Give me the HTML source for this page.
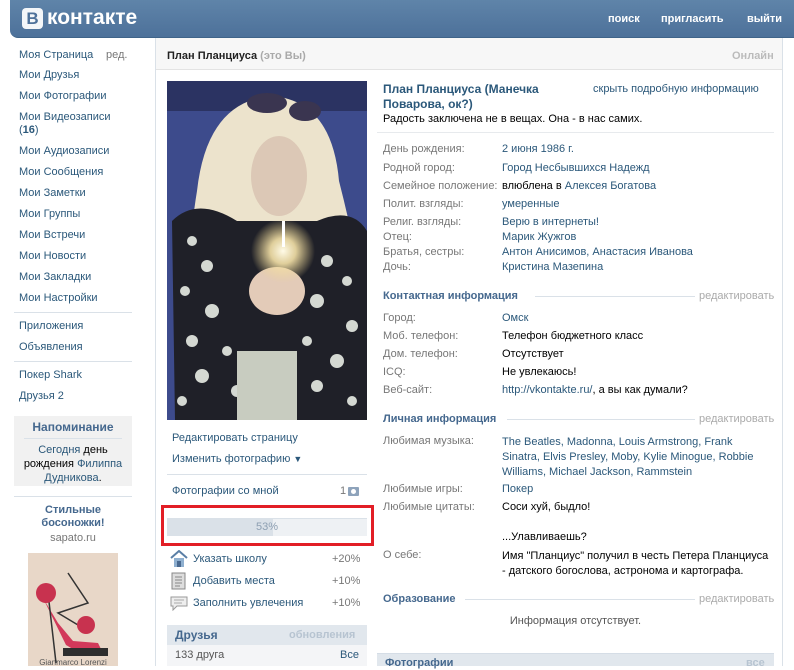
<!DOCTYPE html>
<html><head><meta charset="utf-8">
<style>
*{margin:0;padding:0;box-sizing:border-box}
body{width:794px;height:666px;overflow:hidden;background:#fff;font-family:"Liberation Sans",Tahoma,sans-serif;font-size:11px;color:#000;position:relative}
.a{position:absolute;white-space:nowrap;line-height:13px}
.l{color:#2b587a}
.g{color:#777}
.b{font-weight:bold}
.sec{color:#45688e;font-weight:bold}
.hr{position:absolute;height:1px;background:#dae1e8}
</style></head><body>
<!-- header -->
<div style="position:absolute;left:10px;top:0;width:784px;height:38px;background:linear-gradient(#5f84a9,#4d719a);border-bottom-left-radius:8px;border-bottom:1px solid #3f6489"></div>
<div style="position:absolute;left:22px;top:8px;width:21px;height:21px;background:#f3f6f9;border-radius:4px;color:#4d719a;font:bold 17px 'Liberation Sans',sans-serif;text-align:center;line-height:21px">В</div>
<div class="a" style="left:47px;top:6px;color:#fff;font-weight:bold;font-size:21px;line-height:24px">контакте</div>
<div class="a" style="left:608px;top:13px;color:#fff;font-weight:bold">поиск</div>
<div class="a" style="left:661px;top:13px;color:#fff;font-weight:bold">пригласить</div>
<div class="a" style="left:747px;top:13px;color:#fff;font-weight:bold">выйти</div>

<!-- left menu -->
<div class="a l" style="left:19px;top:49px">Моя Страница</div>
<div class="a g" style="left:106px;top:49px">ред.</div>
<div class="a l" style="left:19px;top:69px">Мои Друзья</div>
<div class="a l" style="left:19px;top:90px">Мои Фотографии</div>
<div class="a l" style="left:19px;top:111px">Мои Видеозаписи</div>
<div class="a l" style="left:19px;top:124px">(<b>16</b>)</div>
<div class="a l" style="left:19px;top:145px">Мои Аудиозаписи</div>
<div class="a l" style="left:19px;top:166px">Мои Сообщения</div>
<div class="a l" style="left:19px;top:187px">Мои Заметки</div>
<div class="a l" style="left:19px;top:208px">Мои Группы</div>
<div class="a l" style="left:19px;top:229px">Мои Встречи</div>
<div class="a l" style="left:19px;top:250px">Мои Новости</div>
<div class="a l" style="left:19px;top:271px">Мои Закладки</div>
<div class="a l" style="left:19px;top:292px">Мои Настройки</div>
<div class="hr" style="left:14px;top:312px;width:118px"></div>
<div class="a l" style="left:19px;top:320px">Приложения</div>
<div class="a l" style="left:19px;top:341px">Объявления</div>
<div class="hr" style="left:14px;top:361px;width:118px"></div>
<div class="a l" style="left:19px;top:369px">Покер Shark</div>
<div class="a l" style="left:19px;top:390px">Друзья 2</div>

<div style="position:absolute;left:14px;top:416px;width:118px;height:70px;background:#f1f1f1"></div>
<div class="a b" style="left:14px;top:421px;width:118px;text-align:center;color:#45688e;font-size:12px">Напоминание</div>
<div class="hr" style="left:24px;top:438px;width:98px"></div>
<div class="a" style="left:14px;top:443px;width:118px;text-align:center;line-height:14px;white-space:normal"><span class="l">Сегодня</span> день<br>рождения <span class="l">Филиппа</span><br><span class="l">Дудникова</span>.</div>
<div class="hr" style="left:14px;top:496px;width:118px"></div>
<div class="a b" style="left:14px;top:504px;width:118px;text-align:center;color:#45688e;line-height:13px;white-space:normal">Стильные<br>босоножки!</div>
<div class="a g" style="left:14px;top:532px;width:118px;text-align:center">sapato.ru</div>
<svg style="position:absolute;left:28px;top:553px" width="90" height="113">
<rect width="90" height="113" fill="#e8d7c8"/>
<path d="M15 45 L30 70 L45 88 L70 90 L75 100 L55 102 L38 92 Z" fill="#d2395a"/>
<path d="M20 40 L28 110 M40 20 L60 50 L30 60 L55 75" stroke="#333" stroke-width="1.5" fill="none"/>
<circle cx="18" cy="40" r="10" fill="#c8324f"/><circle cx="58" cy="72" r="9" fill="#c8324f"/>
<rect x="35" y="95" width="45" height="8" fill="#2e2e2e"/>
<text x="45" y="112" font-size="8" fill="#555" text-anchor="middle" font-family="Liberation Sans">Gianmarco Lorenzi</text>
</svg>

<!-- main panel -->
<div style="position:absolute;left:155px;top:38px;width:1px;height:628px;background:#dae1e8"></div>
<div style="position:absolute;left:782px;top:38px;width:1px;height:628px;background:#dae1e8"></div>
<div style="position:absolute;left:156px;top:38px;width:626px;height:32px;background:#f7f7f7;border-bottom:1px solid #e3e3e3"></div>
<div class="a b" style="left:167px;top:50px;color:#222">План Планциуса <span style="color:#aaa">(это Вы)</span></div>
<div class="a b" style="left:732px;top:50px;color:#bbb">Онлайн</div>

<!-- photo -->
<svg style="position:absolute;left:167px;top:81px" width="200" height="339">
<defs><radialGradient id="gl" cx="0.5" cy="0.5" r="0.5"><stop offset="0" stop-color="#fffbe8"/><stop offset="0.4" stop-color="#f5e2a8" stop-opacity=".9"/><stop offset="1" stop-color="#f0d890" stop-opacity="0"/></radialGradient></defs>
<rect width="200" height="339" fill="#3d4b8c"/>
<rect width="200" height="30" fill="#2b3362"/>
<path d="M30 110 Q40 20 105 15 Q165 20 172 100 Q190 170 198 230 L170 240 L40 240 Q15 200 30 110Z" fill="#ece3cc"/>
<path d="M5 140 Q30 115 70 140 L150 140 Q185 125 200 150 L200 339 L8 339 Z" fill="#1f2028"/>
<g fill="#d4d8d2">
<circle cx="25" cy="160" r="5"/><circle cx="40" cy="185" r="6"/><circle cx="18" cy="210" r="5"/><circle cx="45" cy="230" r="7"/><circle cx="25" cy="260" r="6"/><circle cx="60" cy="270" r="5"/><circle cx="35" cy="295" r="7"/><circle cx="15" cy="320" r="5"/><circle cx="70" cy="310" r="6"/>
<circle cx="160" cy="180" r="6"/><circle cx="180" cy="200" r="5"/><circle cx="150" cy="220" r="7"/><circle cx="185" cy="245" r="6"/><circle cx="140" cy="260" r="5"/><circle cx="170" cy="280" r="7"/><circle cx="150" cy="305" r="6"/><circle cx="185" cy="320" r="5"/><circle cx="120" cy="290" r="5"/><circle cx="95" cy="300" r="6"/>
</g>
<rect x="70" y="270" width="60" height="69" fill="#c8ccc0"/>
<ellipse cx="112" cy="95" rx="28" ry="40" fill="#dcc8b6"/>
<ellipse cx="110" cy="210" rx="28" ry="24" fill="#e3cbb8"/>
<ellipse cx="116" cy="170" rx="32" ry="32" fill="url(#gl)"/>
<rect x="115" y="140" width="3" height="26" fill="#fff"/>
<ellipse cx="100" cy="22" rx="20" ry="10" fill="#3a3550"/>
<ellipse cx="138" cy="30" rx="16" ry="10" fill="#3a3550"/>
</svg>

<div class="a l" style="left:172px;top:432px">Редактировать страницу</div>
<div class="a l" style="left:172px;top:453px">Изменить фотографию <span style="font-size:9px">▼</span></div>
<div class="hr" style="left:167px;top:474px;width:200px"></div>
<div class="a l" style="left:172px;top:485px">Фотографии со мной</div>
<div class="a g" style="left:340px;top:485px">1</div>
<div style="position:absolute;left:348px;top:487px;width:11px;height:9px;background:#8ea3bb;border-radius:1px"></div>
<div style="position:absolute;left:351px;top:489px;width:5px;height:5px;background:#fff;border-radius:50%"></div>

<div style="position:absolute;left:161px;top:505px;width:213px;height:41px;border:3px solid #e21e26"></div>
<div style="position:absolute;left:167px;top:518px;width:200px;height:18px;background:#eef1f4;border-top:1px solid #dae1e8"></div>
<div style="position:absolute;left:167px;top:518px;width:106px;height:18px;background:#dae1e8"></div>
<div class="a" style="left:167px;top:521px;width:200px;text-align:center;color:#8d9fb2">53%</div>

<svg style="position:absolute;left:170px;top:550px" width="18" height="18"><path d="M1 8 L9 1 L17 8" stroke="#5a7fa6" stroke-width="2" fill="none"/><rect x="4" y="8" width="10" height="9" fill="#8fb0d0"/><rect x="7" y="11" width="4" height="6" fill="#4a6a90"/></svg>
<svg style="position:absolute;left:171px;top:572px" width="15" height="18"><rect x="1" y="1" width="13" height="16" fill="#ddd" stroke="#888"/><path d="M4 5h7M4 8h7M4 11h7M4 14h5" stroke="#888"/></svg>
<svg style="position:absolute;left:170px;top:596px" width="18" height="15"><path d="M1 1h16v9H7l-4 4v-4H1z" fill="#eee" stroke="#999"/><path d="M4 4h10M4 7h8" stroke="#aaa"/></svg>
<div class="a l" style="left:193px;top:553px">Указать школу</div><div class="a g" style="left:332px;top:553px">+20%</div>
<div class="a l" style="left:193px;top:575px">Добавить места</div><div class="a g" style="left:332px;top:575px">+10%</div>
<div class="a l" style="left:193px;top:597px">Заполнить увлечения</div><div class="a g" style="left:332px;top:597px">+10%</div>

<div style="position:absolute;left:167px;top:625px;width:200px;height:20px;background:#e1e7ed"></div>
<div class="a b" style="left:175px;top:629px;color:#45688e;font-size:12px">Друзья</div>
<div class="a b" style="left:289px;top:629px;color:#b7c4d1">обновления</div>
<div style="position:absolute;left:167px;top:645px;width:200px;height:21px;background:#f4f5f7"></div>
<div class="a g" style="left:175px;top:649px;color:#555">133 друга</div>
<div class="a l" style="left:340px;top:649px">Все</div>

<!-- right column -->
<div class="a b l" style="left:383px;top:82px;font-size:12px;line-height:15px">План Планциуса (Манечка<br>Поварова, ок?)</div>
<div class="a l" style="left:593px;top:83px">скрыть подробную информацию</div>
<div class="a" style="left:383px;top:113px">Радость заключена не в вещах. Она - в нас самих.</div>
<div class="hr" style="left:377px;top:132px;width:397px;background:#e7eaed"></div>

<div class="a g" style="left:383px;top:143px">День рождения:</div><div class="a l" style="left:502px;top:143px">2 июня 1986 г.</div>
<div class="a g" style="left:383px;top:162px">Родной город:</div><div class="a l" style="left:502px;top:162px">Город Несбывшихся Надежд</div>
<div class="a g" style="left:383px;top:180px">Семейное положение:</div><div class="a" style="left:502px;top:180px">влюблена в <span class="l">Алексея Богатова</span></div>
<div class="a g" style="left:383px;top:198px">Полит. взгляды:</div><div class="a l" style="left:502px;top:198px">умеренные</div>
<div class="a g" style="left:383px;top:216px">Религ. взгляды:</div><div class="a l" style="left:502px;top:216px">Верю в интернеты!</div>
<div class="a g" style="left:383px;top:231px">Отец:</div><div class="a l" style="left:502px;top:231px">Марик Жужгов</div>
<div class="a g" style="left:383px;top:246px">Братья, сестры:</div><div class="a l" style="left:502px;top:246px">Антон Анисимов, Анастасия Иванова</div>
<div class="a g" style="left:383px;top:261px">Дочь:</div><div class="a l" style="left:502px;top:261px">Кристина Мазепина</div>

<div class="a sec" style="left:383px;top:290px">Контактная информация</div>
<div class="hr" style="left:535px;top:296px;width:160px"></div>
<div class="a" style="left:699px;top:290px;color:#aaa">редактировать</div>
<div class="a g" style="left:383px;top:312px">Город:</div><div class="a l" style="left:502px;top:312px">Омск</div>
<div class="a g" style="left:383px;top:330px">Моб. телефон:</div><div class="a" style="left:502px;top:330px">Телефон бюджетного класс</div>
<div class="a g" style="left:383px;top:348px">Дом. телефон:</div><div class="a" style="left:502px;top:348px">Отсутствует</div>
<div class="a g" style="left:383px;top:366px">ICQ:</div><div class="a" style="left:502px;top:366px">Не увлекаюсь!</div>
<div class="a g" style="left:383px;top:384px">Веб-сайт:</div><div class="a" style="left:502px;top:384px"><span class="l">http://vkontakte.ru/</span>, а вы как думали?</div>

<div class="a sec" style="left:383px;top:413px">Личная информация</div>
<div class="hr" style="left:507px;top:419px;width:188px"></div>
<div class="a" style="left:699px;top:413px;color:#aaa">редактировать</div>
<div class="a g" style="left:383px;top:435px">Любимая музыка:</div>
<div class="a l" style="left:502px;top:435px;line-height:15px">The Beatles, Madonna, Louis Armstrong, Frank<br>Sinatra, Elvis Presley, Moby, Kylie Minogue, Robbie<br>Williams, Michael Jackson, Rammstein</div>
<div class="a g" style="left:383px;top:483px">Любимые игры:</div><div class="a l" style="left:502px;top:483px">Покер</div>
<div class="a g" style="left:383px;top:501px">Любимые цитаты:</div><div class="a" style="left:502px;top:501px">Соси хуй, быдло!</div>
<div class="a" style="left:502px;top:531px">...Улавливаешь?</div>
<div class="a g" style="left:383px;top:549px">О себе:</div>
<div class="a" style="left:502px;top:549px;line-height:15px">Имя "Планциус" получил в честь Петера Планциуса<br>- датского богослова, астронома и картографа.</div>

<div class="a sec" style="left:383px;top:593px">Образование</div>
<div class="hr" style="left:465px;top:599px;width:230px"></div>
<div class="a" style="left:699px;top:593px;color:#aaa">редактировать</div>
<div class="a" style="left:377px;top:615px;width:397px;text-align:center;color:#555">Информация отсутствует.</div>

<div style="position:absolute;left:377px;top:653px;width:397px;height:13px;background:#e1e7ed;border-top:1px solid #d5dde6"></div>
<div class="a sec" style="left:385px;top:657px;color:#45688e">Фотографии</div>
<div class="a b" style="left:746px;top:657px;color:#b7c4d1">все</div>
</body></html>
